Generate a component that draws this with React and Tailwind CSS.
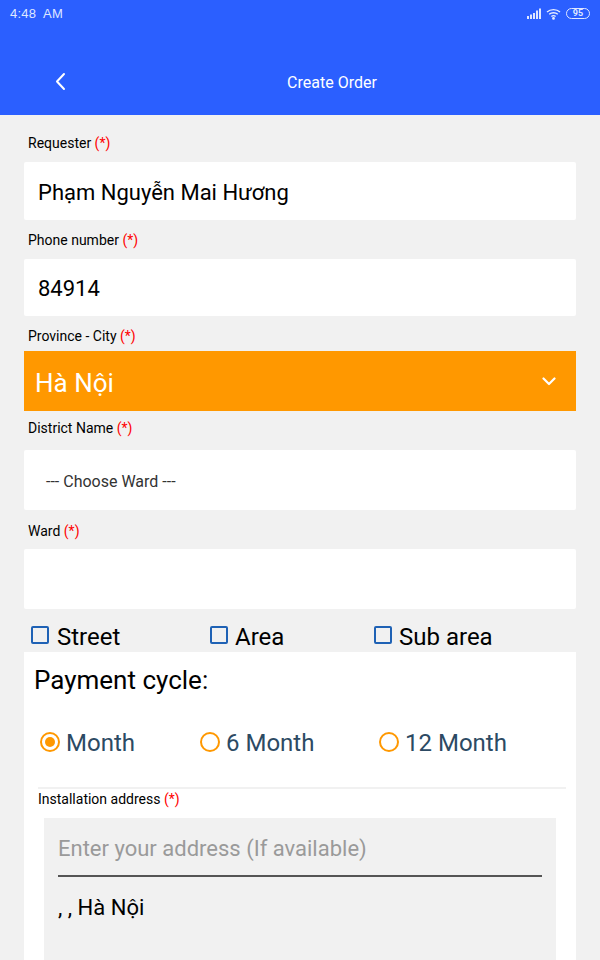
import React from "react";

const font = { fontFamily: "Roboto, sans-serif" };

function Label({ text, className = "" }) {
  return (
    <div className={`pl-1 text-[14px] leading-[20px] text-black ${className}`}>
      {text} <span className="text-[#f00]">(*)</span>
    </div>
  );
}

function Check({ label, className, gap = "ml-[7px]" }) {
  return (
    <div className={`flex items-center ${className}`}>
      <span className="block h-[18px] w-[18px] -translate-y-[2px] rounded-[2px] border-2 border-[#1f62b5] bg-transparent" />
      <span className={`${gap} text-[24px] leading-[28px] text-black`}>{label}</span>
    </div>
  );
}

function Radio({ label, checked, className }) {
  return (
    <div className={`flex items-center ${className}`}>
      <span className="flex h-[20px] w-[20px] items-center justify-center rounded-full border-2 border-[#ff9800]">
        {checked && <span className="block h-[10px] w-[10px] rounded-full bg-[#ff9800]" />}
      </span>
      <span className="ml-[6px] pt-[2px] text-[24px] leading-[30px] text-[#2c4a63]">{label}</span>
    </div>
  );
}

export default function App() {
  return (
    <div style={font} className="h-[960px] w-[600px] overflow-hidden bg-[#f1f1f1]">
      <header className="relative h-[115px] bg-[#2b5fff] text-white">
        <div className="flex h-[27px] items-center justify-between pl-[10px] pr-[10px]">
          <span style={{ fontFamily: '"Liberation Sans", sans-serif' }} className="text-[13px] tracking-[0.2px] text-[#dfe7ff]">4:48&nbsp; AM</span>
          <div className="flex items-center gap-[5px]">
            <svg width="14" height="11" viewBox="0 0 14 11" fill="#dfe7ff">
              <rect x="0" y="8" width="2" height="3" /><rect x="3" y="6.5" width="2" height="4.5" /><rect x="6" y="5" width="2" height="6" /><rect x="9" y="2.5" width="2" height="8.5" /><rect x="12" y="0.5" width="2" height="10.5" />
            </svg>
            <svg width="15" height="12" viewBox="0 0 15 12" fill="none" stroke="#e8eeff" strokeWidth="1.4">
              <path d="M1 4 C4.5 .8 10.5 .8 14 4" /><path d="M3.2 6.3 C5.5 4.2 9.5 4.2 11.8 6.3" /><path d="M5.4 8.5 C6.6 7.5 8.4 7.5 9.6 8.5" /><circle cx="7.5" cy="10.4" r=".7" fill="#e8eeff" />
            </svg>
            <span className="flex h-[11px] w-[24px] items-center justify-center rounded-full border border-[#dfe7ff] text-[9px] font-bold leading-none text-[#dfe7ff]">95</span>
          </div>
        </div>
        <div className="mt-[28px] flex h-[54px] items-center justify-center pl-[64px] pt-[1px] text-[16px]">Create Order</div>
        <svg className="absolute left-[55px] top-[72px]" width="11" height="19" viewBox="0 0 11 19" fill="none" stroke="#fff" strokeWidth="2" strokeLinecap="round" strokeLinejoin="round">
          <path d="M9 2 L2 9.5 L9 17" />
        </svg>
      </header>

      <main className="px-6">
        <Label text="Requester" className="pt-[18px] pb-[9px]" />
        <div className="flex h-[58px] items-center rounded-[2px] bg-white px-[14px] pt-[2px] text-[22px] text-black">Phạm Nguyễn Mai Hương</div>
        <Label text="Phone number" className="pt-[10px] pb-[9px]" />
        <div className="flex h-[57px] items-center rounded-[2px] bg-white px-[14px] pt-[2px] text-[22px] text-black">84914</div>
        <Label text="Province - City" className="h-[35px] pt-[10px]" />
        <div className="flex h-[60px] items-center justify-between bg-[#ff9800] pl-[11px] pr-[20px] text-[26px] text-white">
          <span className="pt-[4px]">Hà Nội</span>
          <svg width="14" height="9" viewBox="0 0 14 9" fill="none" stroke="#fff" strokeWidth="2.2" strokeLinecap="round" strokeLinejoin="round"><path d="M1.5 1.5 L7 7 L12.5 1.5" /></svg>
        </div>
        <Label text="District Name" className="h-[39px] pt-[7px]" />
        <div className="flex h-[60px] items-center rounded-[2px] bg-white pl-[22px] pt-[3px] text-[16px] text-[#333]">--- Choose Ward ---</div>
        <Label text="Ward" className="h-[39px] pt-[11px]" />
        <div className="h-[60px] rounded-[2px] bg-white" />
        <div className="flex h-[43px] items-end pb-[1px]">
          <Check label="Street" gap="ml-[8px]" className="ml-[7px] w-[179px]" />
          <Check label="Area" className="w-[164px]" />
          <Check label="Sub area" />
        </div>
        <section className="bg-white">
          <div className="pl-[10px] pt-[12px] text-[26px] leading-[32px] text-black">Payment cycle:</div>
          <div className="flex pl-[16px] pt-[30px]">
            <Radio label="Month" checked className="w-[160px]" />
            <Radio label="6 Month" className="w-[179px]" />
            <Radio label="12 Month" />
          </div>
          <div className="ml-[14px] mr-[10px] mt-[29px] h-[2px] bg-[#f1f1f1]" />
          <Label text="Installation address" className="ml-[10px] pb-[9px]" />
          <div className="mx-[20px] h-[142px] bg-[#f1f1f1] px-[14px]">
            <div className="flex h-[59px] items-center border-b-2 border-[#555] pt-[3px] text-[22px] text-[#9a9a9a]">Enter your address (If available)</div>
            <div className="pt-[16px] text-[22px] leading-[30px] text-black">, , Hà Nội</div>
          </div>
        </section>
      </main>
    </div>
  );
}
